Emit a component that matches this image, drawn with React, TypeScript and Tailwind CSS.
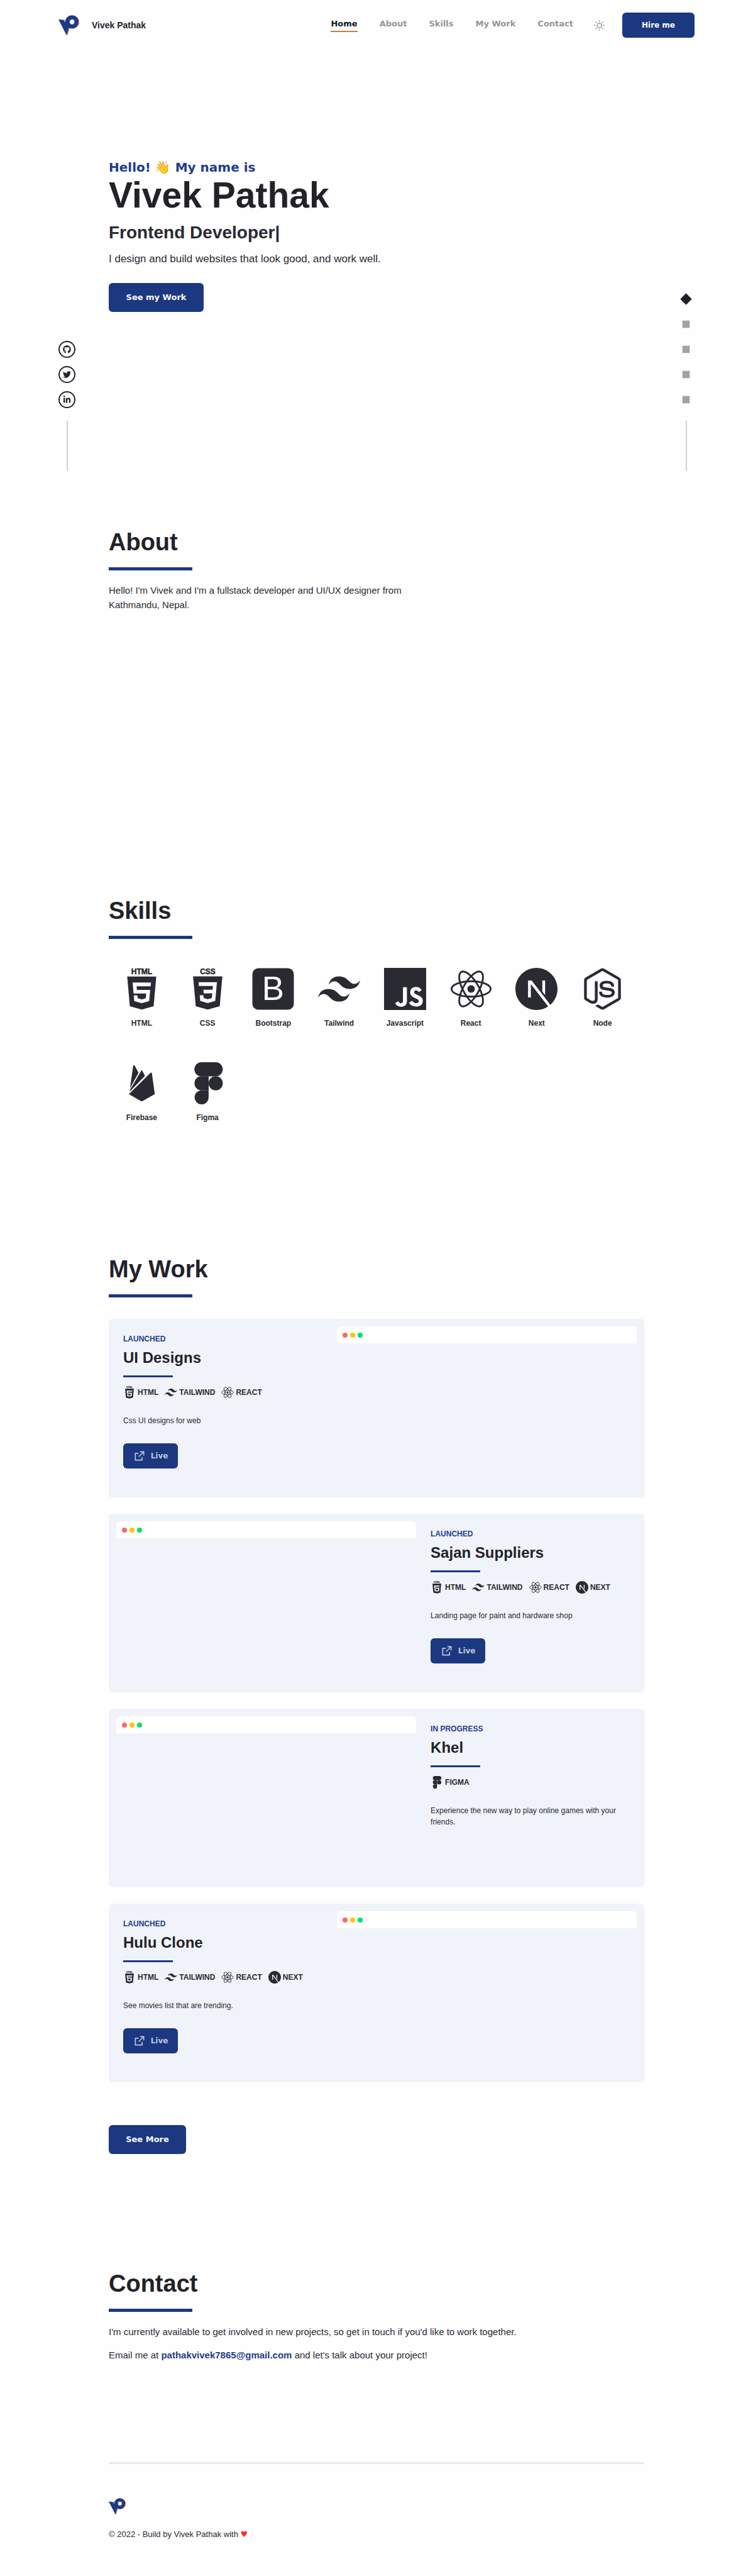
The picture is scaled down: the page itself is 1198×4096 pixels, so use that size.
import type { ReactNode } from "react";
import { FiSun } from "react-icons/fi";
import { FaGithub, FaLinkedinIn, FaNodeJs, FaTwitter } from "react-icons/fa";
import { SiJavascript, SiNextdotjs, SiTailwindcss } from "react-icons/si";
import { RiExternalLinkLine } from "react-icons/ri";

type IconProps = { className?: string };

function Logo({ className }: IconProps) {
  const mark = (
    <>
      <circle cx="79" cy="39" r="27" fill="none" strokeWidth="24" />
      <path d="M0 24 36 29 33 38 50 42 61 72 48 118Z" stroke="none" />
    </>
  );
  return (
    <svg viewBox="0 0 122 120" className={className} aria-hidden="true">
      <g transform="translate(5 1)" fill="#e2854a" stroke="#e2854a">{mark}</g>
      <g fill="#1a3a8a" stroke="#1a3a8a">{mark}</g>
    </svg>
  );
}

function Wordmark({ children }: { children: string }) {
  return (
    <text x="64" y="19" textAnchor="middle" fontFamily="Liberation Sans, sans-serif" fontWeight="700" fontSize="23" stroke="currentColor" strokeWidth="1">
      {children}
    </text>
  );
}

function HtmlIcon({ className }: IconProps) {
  return (
    <svg viewBox="0 0 128 128" className={className} fill="currentColor" overflow="visible" aria-hidden="true">
      <Wordmark>HTML</Wordmark>
      <path d="M27.854 116.354l-8.043-90.211h88.378l-8.051 90.197-36.192 10.033z" />
      <g fill="var(--cut)">
        <path d="M64 66.978H49.359l-1.010-11.331H91l1-11.064H36.257l.264 2.969 2.720 30.489H64z" />
        <path d="M64 95.711l-.049.013-12.321-3.328-.788-8.823H39.735l1.550 17.372 22.664 6.292.051-.015z" />
        <path d="M63.500 66.978v11.063h14.086l-1.284 14.349-12.802 3.431v11.510l23.144-6.386.166-1.870 2.600-29.127.270-2.970z" />
      </g>
    </svg>
  );
}

function CssIcon({ className }: IconProps) {
  return (
    <svg viewBox="0 0 128 128" className={className} fill="currentColor" overflow="visible" aria-hidden="true">
      <Wordmark>CSS</Wordmark>
      <path d="M27.613 116.706l-8.097-90.813h88.967l-8.104 90.798-36.434 10.102z" />
      <g fill="var(--cut)">
        <path d="M36.138 43.677h55.792l-.267 2.988-2.737 30.692H51.753l-.998-11.136h27.984l1.019-11.405H37.136z" />
        <path d="M64.200 95.100l-.182.060-12.404-3.350-.794-8.883H39.642l1.561 17.488 22.814 6.333.183-.015z" />
        <path d="M77.792 76.500l-1.342 15.302-12.622 3.393v11.588l23.033-6.368.168-1.882 1.970-22.033z" />
      </g>
    </svg>
  );
}

function BootstrapIcon({ className }: IconProps) {
  return (
    <svg viewBox="0 0 128 128" className={className} fill="currentColor" aria-hidden="true">
      <rect x="1" y="1" width="126" height="126" rx="18" />
      <text x="30" y="97" fontFamily="Liberation Sans, sans-serif" fontWeight="400" fontSize="101" fill="white">B</text>
    </svg>
  );
}

function ReactIcon({ className }: IconProps) {
  return (
    <svg viewBox="0 0 128 128" className={className} fill="none" stroke="currentColor" strokeWidth="5.500" aria-hidden="true">
      <ellipse cx="64" cy="64" rx="59.500" ry="23.500" />
      <ellipse cx="64" cy="64" rx="59.500" ry="23.500" transform="rotate(60 64 64)" />
      <ellipse cx="64" cy="64" rx="59.500" ry="23.500" transform="rotate(-60 64 64)" />
      <circle cx="64" cy="64" r="11.300" fill="currentColor" stroke="none" />
    </svg>
  );
}

function FirebaseIcon({ className }: IconProps) {
  return (
    <svg viewBox="0 0 128 128" className={className} fill="currentColor" aria-hidden="true">
      <path d="M28.200 79.500 38 11Q39.300 7.500 42.600 10.300L54.300 32.200Z" />
      <path d="M27 90 29.600 81.800 61.300 27.500Q64 22.500 66.700 27.500L73.800 41.700Z" />
      <path d="M25 97 90.500 32.600Q94 29.800 94.800 33.500L103.700 97 66.500 117.800Q64 119 61.500 117.800Z" />
    </svg>
  );
}

function FigmaIcon({ className }: IconProps) {
  return (
    <svg viewBox="0 0 128 128" className={className} fill="currentColor" aria-hidden="true">
      <rect x="23.500" y="0" width="86" height="43" rx="21.500" />
      <path d="M66.700 42.700H45a21.300 21.300 0 0 0 0 42.600h21.700z" />
      <path d="M66.700 85.300H45a21.300 21.300 0 1 0 21.700 21.300z" />
      <circle cx="88.200" cy="64" r="21.500" />
    </svg>
  );
}

const icons: Record<string, (p: IconProps) => ReactNode> = {
  HTML: HtmlIcon,
  CSS: CssIcon,
  Bootstrap: BootstrapIcon,
  Tailwind: SiTailwindcss,
  Javascript: SiJavascript,
  React: ReactIcon,
  Next: SiNextdotjs,
  Node: FaNodeJs,
  Firebase: FirebaseIcon,
  Figma: FigmaIcon,
};

const navItems = ["Home", "About", "Skills", "My Work", "Contact"];

const socials = [
  { name: "GitHub", Icon: FaGithub },
  { name: "Twitter", Icon: FaTwitter },
  { name: "LinkedIn", Icon: FaLinkedinIn },
];

const projects = [
  { status: "Launched", title: "UI Designs", tech: ["HTML", "Tailwind", "React"], text: "Css UI designs for web", live: true, previewFirst: false },
  { status: "Launched", title: "Sajan Suppliers", tech: ["HTML", "Tailwind", "React", "Next"], text: "Landing page for paint and hardware shop", live: true, previewFirst: true },
  { status: "In progress", title: "Khel", tech: ["Figma"], text: "Experience the new way to play online games with your friends.", live: false, previewFirst: true },
  { status: "Launched", title: "Hulu Clone", tech: ["HTML", "Tailwind", "React", "Next"], text: "See movies list that are trending.", live: true, previewFirst: false },
];

function SectionHeading({ children }: { children: ReactNode }) {
  return (
    <>
      <h2 className="text-[38px] leading-12 font-bold text-[#222228]">{children}</h2>
      <div className="mt-4 h-[5px] w-[133px] bg-[#1b3880]" />
    </>
  );
}

function Preview() {
  return (
    <div className="m-3 w-[56%] shrink-0">
      <div className="flex h-7 items-center gap-1 rounded-t-md border-b border-gray-100 bg-white pl-[9px]">
        <span className="size-2 rounded-full bg-red-400" />
        <span className="size-2 rounded-full bg-yellow-400" />
        <span className="size-2 rounded-full bg-green-400" />
      </div>
    </div>
  );
}

function ProjectCard({ project }: { project: (typeof projects)[number] }) {
  const { status, title, tech, text, live, previewFirst } = project;
  return (
    <article className="flex min-h-[284px] rounded-md bg-[#f0f3f9] [--cut:#f0f3f9]">
      {previewFirst && <Preview />}
      <div className={previewFirst ? "flex-1 pt-[23px] pr-6 pl-[11px]" : "flex-1 px-[23px] pt-[23px]"}>
        <p className="text-xs leading-[18px] font-bold text-[#1f3d8a] uppercase">{status}</p>
        <h3 className="mt-[5px] text-2xl leading-8 font-bold text-[#222228]">{title}</h3>
        <div className="mt-3 h-[3px] w-[79px] bg-[#1b3880]" />
        <ul className="mt-3.5 flex h-5 items-center gap-2.5">
          {tech.map((name) => {
            const Icon = icons[name];
            return (
              <li key={name} className="flex items-center gap-[3px] text-xs font-bold uppercase">
                <Icon className="size-5" />
                {name}
              </li>
            );
          })}
        </ul>
        <p className="mt-[26px] text-xs leading-[18px]">{text}</p>
        {live && (
          <a href="#live" className="mt-[27px] inline-flex h-10 w-[87px] items-center justify-center gap-2 rounded-md bg-[#1b3880] font-[DejaVu_Sans,sans-serif] text-xs font-bold text-[#bdc6dc]">
            <RiExternalLinkLine className="size-5" />
            Live
          </a>
        )}
      </div>
      {!previewFirst && <Preview />}
    </article>
  );
}

export default function App() {
  return (
    <div className="min-h-screen bg-[#fefefe] font-[Liberation_Sans,Arial,sans-serif] text-[#2a2a33] [--cut:#fefefe]">
      <header className="mx-auto flex h-20 max-w-[1012px] items-center justify-between">
        <a href="#home" className="flex items-center gap-5 text-[14px] font-bold text-[#222228]">
          <Logo className="size-[33px]" />
          Vivek Pathak
        </a>
        <div className="flex items-center">
          <nav className="flex gap-[35px] font-[DejaVu_Sans,sans-serif] text-[13px] leading-[18px] font-bold">
            {navItems.map((item, i) => (
              <a
                key={item}
                href="#"
                className={
                  i === 0
                    ? "border-b-2 border-[#cb8040] pb-0.5 text-[#111827]"
                    : "border-b-2 border-transparent pb-0.5 text-[#949496]"
                }
              >
                {item}
              </a>
            ))}
          </nav>
          <button type="button" aria-label="Toggle theme" className="ml-[33px] text-[#949496]">
            <FiSun className="size-[17px]" />
          </button>
          <button type="button" className="ml-7 h-10 w-[115px] rounded-md bg-[#1b3880] font-[DejaVu_Sans,sans-serif] text-xs font-bold text-white">
            Hire me
          </button>
        </div>
      </header>

      <div className="mx-auto flex min-h-[669px] max-w-[1012px]">
        <aside className="flex w-[27px] flex-col items-center gap-[13px] self-end text-[#22222a]">
          {socials.map(({ name, Icon }) => (
            <a key={name} href="#" aria-label={name} className="flex size-[27px] items-center justify-center rounded-full border-2 border-current">
              <Icon className="size-[13px]" />
            </a>
          ))}
          <div className="mt-[7px] h-20 w-0.5 bg-[#d1d1d2]" />
        </aside>

        <section className="mx-[53px] flex-1 pt-[172px]">
          <p className="font-[DejaVu_Sans,Noto_Color_Emoji,sans-serif] text-xl leading-7 font-bold text-[#1f3d8a]">
            Hello! 👋 My name is
          </p>
          <h1 className="text-[57px] leading-[60px] font-bold text-[#222228]">Vivek Pathak</h1>
          <p className="mt-3 text-[28px] leading-9 font-bold">Frontend Developer|</p>
          <p className="mt-3 text-[17px] leading-6">I design and build websites that look good, and work well.</p>
          <button type="button" className="mt-[26px] h-[46px] w-[151px] rounded-md bg-[#1b3880] font-[DejaVu_Sans,sans-serif] text-[13px] font-bold text-white">
            See my Work
          </button>
        </section>

        <aside className="flex w-[27px] flex-col items-center gap-[27px] self-end">
          {navItems.map((item, i) => (
            <a
              key={item}
              href="#"
              aria-label={item}
              className={
                i === 0
                  ? "size-[13px] rotate-45 bg-[#1f1f27]"
                  : "size-[13px] border border-[#e3e3e5] bg-[#a2a1a6]"
              }
            />
          ))}
          <div className="h-20 w-0.5 bg-[#d1d1d2]" />
        </aside>
      </div>

      <main className="mx-auto max-w-[852px]">
        <section className="pt-[89px]">
          <SectionHeading>About</SectionHeading>
          <p className="mt-5 max-w-[480px] text-[15px] leading-[23px]">
            Hello! I'm Vivek and I'm a fullstack developer and UI/UX designer from Kathmandu, Nepal.
          </p>
        </section>

        <section className="pt-[451px]">
          <SectionHeading>Skills</SectionHeading>
          <ul className="mt-[46px] grid grid-cols-8 gap-y-[53px] pr-3.5">
            {Object.entries(icons).map(([name, Icon]) => (
              <li key={name} className="flex flex-col items-center gap-3 text-xs leading-[18px] font-bold">
                <Icon className="size-[67px]" />
                {name}
              </li>
            ))}
          </ul>
        </section>

        <section className="pt-[208px]">
          <SectionHeading>My Work</SectionHeading>
          <div className="mt-[34px] flex flex-col gap-[26px]">
            {projects.map((project) => (
              <ProjectCard key={project.title} project={project} />
            ))}
          </div>
          <button type="button" className="mt-[68px] h-[46px] w-[123px] rounded-md bg-[#1b3880] font-[DejaVu_Sans,sans-serif] text-[13px] font-bold text-white">
            See More
          </button>
        </section>

        <section className="pt-[182px]">
          <SectionHeading>Contact</SectionHeading>
          <div className="mt-5 flex flex-col gap-3.5 text-[15px] leading-[23px]">
            <p>I'm currently available to get involved in new projects, so get in touch if you'd like to work together.</p>
            <p>
              Email me at{" "}
              <a href="mailto:pathakvivek7865@gmail.com" className="font-bold text-[#1f3d8a]">pathakvivek7865@gmail.com</a>{" "}
              and let's talk about your project!
            </p>
          </div>
        </section>
      </main>

      <footer className="mx-auto mt-[159px] max-w-[852px] border-t-3 border-[#e7e8ea] pt-[54px] pb-[54px]">
        <Logo className="size-[27px]" />
        <p className="mt-[21px] text-[13px] leading-5">
          © 2022 - Build by Vivek Pathak with <span className="font-[DejaVu_Sans,sans-serif] text-red-500">♥</span>
        </p>
      </footer>
    </div>
  );
}
